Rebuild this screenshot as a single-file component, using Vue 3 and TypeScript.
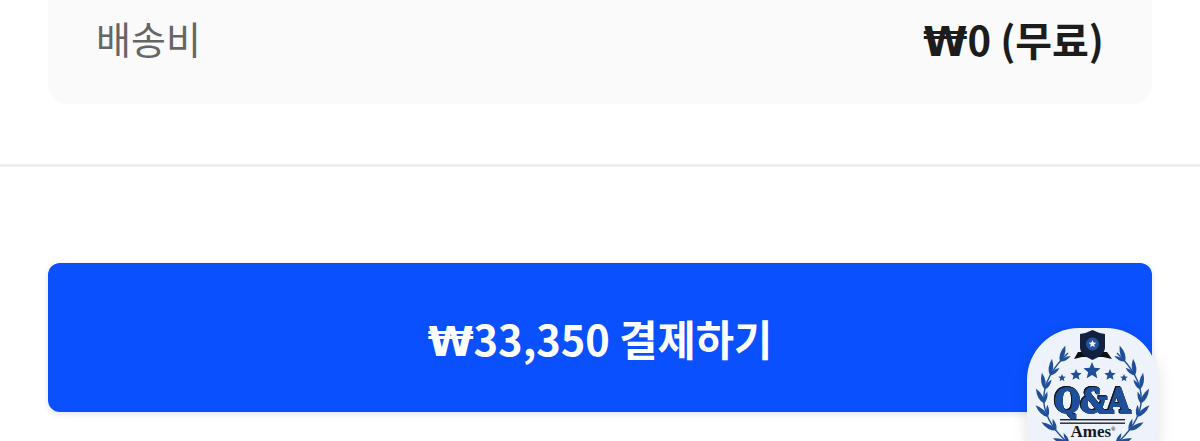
<script setup lang="ts">
const p0 = { x: 42, y: 116 }
const p1 = { x: -8, y: 72 }
const p2 = { x: 41, y: 25 }

interface Leaf {
  id: string
  transform: string
}

// leaves sit in pairs along the curved laurel stem, the inner ones shorter
const leaves: Leaf[] = []
for (let i = 0; i < 7; i++) {
  const t = i / 6.6
  const a = (1 - t) * (1 - t)
  const b = 2 * t * (1 - t)
  const c = t * t
  const x = a * p0.x + b * p1.x + c * p2.x
  const y = a * p0.y + b * p1.y + c * p2.y
  const dx = 2 * (1 - t) * (p1.x - p0.x) + 2 * t * (p2.x - p1.x)
  const dy = 2 * (1 - t) * (p1.y - p0.y) + 2 * t * (p2.y - p1.y)
  const angle = (Math.atan2(dy, dx) * 180) / Math.PI
  leaves.push({ id: `o${i}`, transform: `translate(${x} ${y}) rotate(${angle - 22})` })
  leaves.push({ id: `i${i}`, transform: `translate(${x} ${y}) rotate(${angle + 22}) scale(0.72)` })
}

const stars = [
  { x: 65, y: 43, r: 9 },
  { x: 49, y: 47, r: 6 },
  { x: 83, y: 47, r: 6 },
  { x: 35, y: 50, r: 4 },
  { x: 97, y: 50, r: 4 },
]

function starPoints(cx: number, cy: number, r: number): string {
  const pts: string[] = []
  for (let i = 0; i < 10; i++) {
    const rad = i % 2 === 0 ? r : r * 0.45
    const ang = (Math.PI / 5) * i - Math.PI / 2
    pts.push(`${(cx + rad * Math.cos(ang)).toFixed(2)},${(cy + rad * Math.sin(ang)).toFixed(2)}`)
  }
  return pts.join(' ')
}
</script>

<template>
  <div class="page">
    <section class="summary">
      <div class="row">
        <span class="label">배송비</span>
        <strong class="value"><span class="won">₩</span>0 (무료)</strong>
      </div>
    </section>
    <hr class="divider" />
    <div class="actions">
      <button class="pay" type="button"><span class="won">₩</span>33,350 결제하기</button>
    </div>
    <div class="qna">
      <svg viewBox="0 0 131 113" width="131" height="113">
        <g fill="#1f4f99">
          <g>
            <path d="M42 116 Q-8 72 41 25" fill="none" stroke="#1f4f99" stroke-width="1.4" />
            <path v-for="leaf in leaves" :key="leaf.id" :transform="leaf.transform" d="M0 0 Q7 -4.500 17 0 Q7 4.500 0 0Z" />
          </g>
          <g transform="translate(131 0) scale(-1 1)">
            <path d="M42 116 Q-8 72 41 25" fill="none" stroke="#1f4f99" stroke-width="1.4" />
            <path v-for="leaf in leaves" :key="leaf.id" :transform="leaf.transform" d="M0 0 Q7 -4.500 17 0 Q7 4.500 0 0Z" />
          </g>
        </g>
        <path d="M47 31 L51 24 H80 L85 31 L76 29 H55Z" fill="#0d0f16" />
        <path d="M53 6 Q60 5 65.500 2 Q71 5 78 6 V20 Q78 27 65.500 32 Q53 27 53 20Z" fill="#12213f" />
        <circle cx="65.500" cy="16" r="6.500" fill="#24549f" />
        <polygon :points="starPoints(65.5, 16, 4)" fill="#f4f1e4" />
        <polygon v-for="s in stars" :key="s.x" :points="starPoints(s.x, s.y, s.r)" fill="#1f4f99" />
        <text class="logo-title" x="65.500" y="85" text-anchor="middle" textLength="76" lengthAdjust="spacingAndGlyphs">Q&amp;A</text>
        <rect x="33" y="91" width="65" height="1.400" fill="#20242e" />
        <rect x="33" y="94.500" width="65" height="1.400" fill="#20242e" />
        <text class="logo-name" x="66" y="109" text-anchor="middle">Ames<tspan class="logo-mark" dy="-6">®</tspan></text>
      </svg>
    </div>
  </div>
</template>

<style scoped>
.page {
  position: relative;
  width: 1200px;
  height: 441px;
  overflow: hidden;
  background: #fff;
  font-family: "Noto Sans CJK KR", "Noto Sans", sans-serif;
}
.summary {
  height: 104px;
  margin: 0 48px;
  padding: 0 48px;
  box-sizing: border-box;
  background: #fafafa;
  border-radius: 0 0 20px 20px;
}
.row {
  display: flex;
  justify-content: space-between;
  align-items: center;
  height: 78px;
}
.label {
  margin-top: -4px;
  font-size: 38px;
  color: #666;
}
.value {
  font-size: 40px;
  font-weight: 700;
  color: #1c1c1c;
}
.won {
  font-family: "DejaVu Sans", sans-serif;
}
.divider {
  height: 3px;
  margin: 60px 0 0;
  border: 0;
  background: #eeeeee;
}
.actions {
  padding: 96px 48px 0;
}
.pay {
  display: block;
  width: 100%;
  height: 149px;
  padding: 0;
  border: 0;
  border-radius: 12px;
  background: #0a50ff;
  box-shadow: 0 2px 6px rgba(0, 30, 120, 0.12);
  color: #fff;
  font-family: inherit;
  font-size: 41.6px;
  font-weight: 700;
}
.qna {
  position: absolute;
  left: 1027px;
  top: 328px;
  width: 131px;
  height: 150px;
  border-radius: 52px;
  background: #eef2fb;
  box-shadow: 0 4px 16px rgba(0, 0, 0, 0.12);
}
.qna svg {
  display: block;
}
.logo-title {
  font-family: "DejaVu Serif", serif;
  font-size: 33px;
  font-weight: 700;
  fill: #1f4f99;
  stroke: #1f4f99;
  stroke-width: 1.8px;
  filter: drop-shadow(0.4px 0.4px 0 #10131c) drop-shadow(-0.4px -0.4px 0 #10131c);
}
.logo-name {
  font-family: "Liberation Serif", serif;
  font-size: 17px;
  font-weight: 700;
  fill: #15181f;
}
.logo-mark {
  font-size: 6px;
}
</style>
